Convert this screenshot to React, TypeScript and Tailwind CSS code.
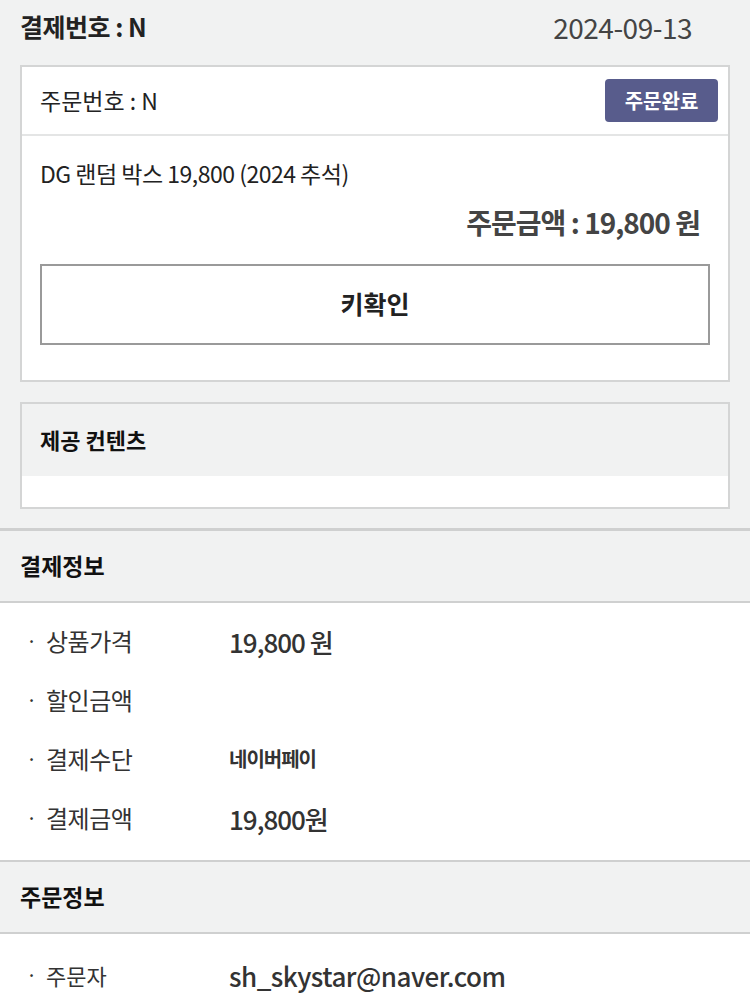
import React from "react";

const font = { fontFamily: '"Noto Sans CJK KR", "Noto Sans", sans-serif' };

type Row = { label: string; value: string; bold?: boolean; small?: boolean };

const payRows: Row[] = [
  { label: "상품가격", value: "19,800 원" },
  { label: "할인금액", value: "" },
  { label: "결제수단", value: "네이버페이", bold: true, small: true },
  { label: "결제금액", value: "19,800원" },
];

const InfoRow = ({ label, value, small }: Row) => (
  <div className="flex items-center h-[59px]">
    <span className="w-[25px] pl-[26px] text-[20px] text-[#333]">·</span>
    <span className="w-[203px] pl-[20px] text-[24px] text-[#333] tracking-[-0.5px]">{label}</span>
    <span
      className={`${small ? "text-[20px] font-bold" : "text-[26px] font-medium"} text-[#333] tracking-[-1px]`}
    >
      {value}
    </span>
  </div>
);

const SectionHeader = ({ title }: { title: string }) => (
  <div className="h-[72px] flex items-center px-[20px] bg-[#f1f2f2] border-b-2 border-[#cfd0d0]">
    <h2 className="text-[23px] font-bold text-[#111]">{title}</h2>
  </div>
);

export default function App() {
  return (
    <div className="w-[750px] h-[997px] overflow-hidden bg-[#f1f2f2]" style={font}>
      <div className="px-[20px]">
        <div className="h-[65px] flex items-start justify-between pt-[8px]">
          <span className="text-[25px] font-bold text-[#222] tracking-[-0.5px]">결제번호 : N</span>
          <span className="text-[28px] text-[#444] mr-[38px] tracking-[-0.5px] -mt-[2px]">2024-09-13</span>
        </div>

        <div className="bg-white border-2 border-[#d4d5d5]">
          <div className="h-[69px] flex items-center justify-between pl-[18px] pr-[10px] border-b-2 border-[#e4e5e5]">
            <span className="text-[23px] text-[#222]">주문번호 : N</span>
            <span className="h-[43px] w-[113px] flex items-center justify-center rounded-[4px] bg-[#585c8c] text-white text-[20px] font-bold">
              주문완료
            </span>
          </div>
          <div className="px-[18px] pt-[20px] pb-[35px]">
            <p className="text-[23px] text-[#222] tracking-[-0.5px]">DG 랜덤 박스 19,800 (2024 추석)</p>
            <p className="mt-[10px] text-right pr-[10px] text-[28px] font-bold text-[#444] tracking-[-1px]">
              주문금액 : 19,800 원
            </p>
            <div className="mt-[21px] h-[81px] border-2 border-[#9a9a9a] flex items-center justify-center">
              <span className="text-[25px] font-bold text-[#222]">키확인</span>
            </div>
          </div>
        </div>

        <div className="mt-[20px] border-2 border-[#d4d5d5]">
          <div className="h-[72px] flex items-center pl-[18px] bg-[#f1f2f2]">
            <h2 className="text-[22px] font-bold text-[#111]">제공 컨텐츠</h2>
          </div>
          <div className="h-[31px] bg-white" />
        </div>
      </div>

      <div className="mt-[19px] border-t-[3px] border-[#cfd0d0]">
        <SectionHeader title="결제정보" />
        <div className="bg-white pt-[9px] pb-[12px] border-b-2 border-[#cfd0d0]">
          {payRows.map((r) => (
            <InfoRow key={r.label} {...r} />
          ))}
        </div>
        <SectionHeader title="주문정보" />
        <div className="bg-white pt-[12px] h-[80px]">
          <div className="flex items-center h-[59px]">
            <span className="w-[25px] pl-[26px] text-[20px] text-[#333]">·</span>
            <span className="w-[203px] pl-[20px] text-[22px] text-[#333]">주문자</span>
            <span className="text-[26px] font-medium text-[#333] tracking-[-0.5px]">sh_skystar@naver.com</span>
          </div>
        </div>
      </div>
    </div>
  );
}
